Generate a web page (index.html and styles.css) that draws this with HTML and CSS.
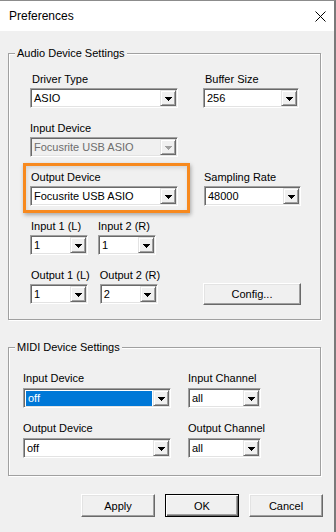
FILE: index.html
```html
<!DOCTYPE html>
<html>
<head>
<meta charset="utf-8">
<link rel="stylesheet" href="styles.css">
</head>
<body>
<div class="window">
  <div class="titlebar">
    <span class="title">Preferences</span>
    <svg class="close" width="11" height="11" viewBox="0 0 11 11"><path d="M0.5 0.5L10.5 10.5M10.5 0.5L0.5 10.5" stroke="#000" stroke-width="1" fill="none"/></svg>
  </div>
  <div class="client">
    <fieldset class="group group-audio">
      <legend>Audio Device Settings</legend>
      <div class="audio-grid">
        <div class="field c1">
          <label class="lbl lbl-pad">Driver Type</label>
          <div class="combo w148"><span class="value">ASIO</span><span class="arrow"><svg width="7" height="4" viewBox="0 0 7 4"><path d="M0 0h7v1h-1v1h-1v1h-1v1h-1v-1h-1v-1h-1v-1h-1z"/></svg></span></div>
        </div>
        <div class="field c2">
          <label class="lbl lbl-pad">Buffer Size</label>
          <div class="combo w96"><span class="value">256</span><span class="arrow"><svg width="7" height="4" viewBox="0 0 7 4"><path d="M0 0h7v1h-1v1h-1v1h-1v1h-1v-1h-1v-1h-1v-1h-1z"/></svg></span></div>
        </div>
        <div class="field c1">
          <label class="lbl">Input Device</label>
          <div class="combo w148 disabled"><span class="value">Focusrite USB ASIO</span><span class="arrow"><svg width="7" height="4" viewBox="0 0 7 4"><path d="M0 0h7v1h-1v1h-1v1h-1v1h-1v-1h-1v-1h-1v-1h-1z"/></svg></span></div>
        </div>
        <div class="field c1 hl">
          <label class="lbl lbl-1">Output Device</label>
          <div class="combo w148"><span class="value">Focusrite USB ASIO</span><span class="arrow"><svg width="7" height="4" viewBox="0 0 7 4"><path d="M0 0h7v1h-1v1h-1v1h-1v1h-1v-1h-1v-1h-1v-1h-1z"/></svg></span></div>
        </div>
        <div class="field c2 shift">
          <label class="lbl">Sampling Rate</label>
          <div class="combo w97"><span class="value">48000</span><span class="arrow"><svg width="7" height="4" viewBox="0 0 7 4"><path d="M0 0h7v1h-1v1h-1v1h-1v1h-1v-1h-1v-1h-1v-1h-1z"/></svg></span></div>
        </div>
        <div class="pair c1">
          <div class="field">
            <label class="lbl lbl-1">Input 1 (L)</label>
            <div class="combo w58"><span class="value">1</span><span class="arrow"><svg width="7" height="4" viewBox="0 0 7 4"><path d="M0 0h7v1h-1v1h-1v1h-1v1h-1v-1h-1v-1h-1v-1h-1z"/></svg></span></div>
          </div>
          <div class="field">
            <label class="lbl">Input 2 (R)</label>
            <div class="combo w58"><span class="value">1</span><span class="arrow"><svg width="7" height="4" viewBox="0 0 7 4"><path d="M0 0h7v1h-1v1h-1v1h-1v1h-1v-1h-1v-1h-1v-1h-1z"/></svg></span></div>
          </div>
        </div>
        <div class="pair c1">
          <div class="field">
            <label class="lbl lbl-1">Output 1 (L)</label>
            <div class="combo w58"><span class="value">1</span><span class="arrow"><svg width="7" height="4" viewBox="0 0 7 4"><path d="M0 0h7v1h-1v1h-1v1h-1v1h-1v-1h-1v-1h-1v-1h-1z"/></svg></span></div>
          </div>
          <div class="field">
            <label class="lbl">Output 2 (R)</label>
            <div class="combo w58"><span class="value">2</span><span class="arrow"><svg width="7" height="4" viewBox="0 0 7 4"><path d="M0 0h7v1h-1v1h-1v1h-1v1h-1v-1h-1v-1h-1v-1h-1z"/></svg></span></div>
          </div>
        </div>
        <button class="btn config c2">Config...</button>
      </div>
    </fieldset>

    <fieldset class="group group-midi">
      <legend>MIDI Device Settings</legend>
      <div class="midi-grid">
        <div class="field">
          <label class="lbl">Input Device</label>
          <div class="combo w148"><span class="value selected">off</span><span class="arrow"><svg width="7" height="4" viewBox="0 0 7 4"><path d="M0 0h7v1h-1v1h-1v1h-1v1h-1v-1h-1v-1h-1v-1h-1z"/></svg></span></div>
        </div>
        <div class="field">
          <label class="lbl">Input Channel</label>
          <div class="combo w73"><span class="value">all</span><span class="arrow"><svg width="7" height="4" viewBox="0 0 7 4"><path d="M0 0h7v1h-1v1h-1v1h-1v1h-1v-1h-1v-1h-1v-1h-1z"/></svg></span></div>
        </div>
        <div class="field">
          <label class="lbl">Output Device</label>
          <div class="combo w148"><span class="value">off</span><span class="arrow"><svg width="7" height="4" viewBox="0 0 7 4"><path d="M0 0h7v1h-1v1h-1v1h-1v1h-1v-1h-1v-1h-1v-1h-1z"/></svg></span></div>
        </div>
        <div class="field">
          <label class="lbl">Output Channel</label>
          <div class="combo w73"><span class="value">all</span><span class="arrow"><svg width="7" height="4" viewBox="0 0 7 4"><path d="M0 0h7v1h-1v1h-1v1h-1v1h-1v-1h-1v-1h-1v-1h-1z"/></svg></span></div>
        </div>
      </div>
    </fieldset>

    <div class="buttons">
      <button class="btn">Apply</button>
      <button class="btn default">OK</button>
      <button class="btn">Cancel</button>
    </div>
  </div>
</div>
</body>
</html>
```
FILE: styles.css
```css
html, body {
  margin: 0;
  padding: 0;
}
body {
  width: 336px;
  height: 532px;
  overflow: hidden;
  background: #f0f0f0;
  font-family: "Liberation Sans", Arial, sans-serif;
  font-size: 11px;
  color: #000;
}
.window {
  height: 532px;
  box-sizing: border-box;
  border-top: 1px solid #8c8c8c;
  border-right: 2px solid #7a7a7a;
  background: #f0f0f0;
}
.titlebar {
  height: 30px;
  background: #fff;
  display: flex;
  align-items: center;
  padding-left: 9px;
}
.title {
  font-size: 12px;
}
.close {
  margin-left: auto;
  margin-right: 8px;
}
.client {
  padding-top: 15px;
}
.group {
  margin: 0 0 0 8px;
  width: 313px;
  box-sizing: border-box;
  border: 1px solid #a0a0a0;
  box-shadow: 1px 1px 0 #fff, inset 1px 1px 0 #fff;
  min-inline-size: 0;
  padding-left: 6px;
  padding-right: 6px;
}
.group legend {
  padding: 0 2px;
  line-height: 14px;
  height: 14px;
  background: #f0f0f0;
}
.group-audio {
  padding-top: 12px;
  padding-bottom: 15px;
}
.group-midi {
  margin-top: 20px;
  padding-top: 17px;
  padding-bottom: 17px;
}
.audio-grid {
  margin-left: 15px;
  display: grid;
  grid-template-columns: 148px 98px;
  column-gap: 25px;
  row-gap: 13px;
}
.midi-grid {
  margin-left: 8px;
  display: grid;
  grid-template-columns: 148px 73px;
  column-gap: 17px;
  row-gap: 13px;
}
.c1 { grid-column: 1; }
.c2 { grid-column: 2; }
.field {
  display: flex;
  flex-direction: column;
}
.lbl {
  display: block;
  height: 14px;
  line-height: 14px;
  margin-bottom: 2px;
  white-space: nowrap;
}
.midi-grid .lbl {
  margin-bottom: 3px;
}
.lbl-pad { padding-left: 2px; }
.lbl-1 { padding-left: 1px; }
.shift { margin-left: 1px; }
.pair {
  display: flex;
  gap: 10px;
}
.combo {
  height: 20px;
  box-sizing: border-box;
  border: 1px solid;
  border-color: #a0a0a0 #fff #fff #a0a0a0;
  box-shadow: inset 1px 1px 0 #696969, inset -1px -1px 0 #e3e3e3;
  background: #fff;
  padding: 1px;
  display: flex;
}
.w148 { width: 148px; }
.w96 { width: 96px; }
.w97 { width: 97px; }
.w58 { width: 58px; }
.w73 { width: 73px; }
.value {
  flex: 1;
  min-width: 0;
  padding-left: 2px;
  line-height: 16px;
  white-space: nowrap;
  overflow: hidden;
}
.value.selected {
  margin: 1px 1px 0 1px;
  line-height: 15px;
  padding-left: 2px;
  background: #0078d7;
  color: #fff;
}
.arrow {
  width: 16px;
  height: 16px;
  flex: none;
  box-sizing: border-box;
  border: 1px solid;
  border-color: #e3e3e3 #696969 #696969 #e3e3e3;
  box-shadow: inset 1px 1px 0 #fff, inset -1px -1px 0 #a0a0a0;
  background: #f0f0f0;
  display: flex;
  align-items: center;
  justify-content: center;
}
.arrow svg {
  display: block;
  fill: #000;
  margin-top: 1px;
}
.combo.disabled {
  background: #f0f0f0;
}
.combo.disabled .value {
  color: #6d6d6d;
}
.combo.disabled .arrow svg {
  fill: #a0a0a0;
}
.hl {
  position: relative;
}
.hl::after {
  content: "";
  position: absolute;
  left: -7px;
  top: -7px;
  right: -12px;
  bottom: -7px;
  border: 3px solid #f7891e;
  box-shadow: 1px 2px 4px rgba(0, 0, 0, 0.3), inset 1px 2px 4px rgba(0, 0, 0, 0.12);
  pointer-events: none;
}
.btn {
  font-family: "Liberation Sans", Arial, sans-serif;
  font-size: 11px;
  color: #000;
  width: 74px;
  height: 23px;
  box-sizing: border-box;
  padding: 0;
  background: #f0f0f0;
  border: 1px solid;
  border-color: #fff #696969 #696969 #fff;
  box-shadow: inset -1px -1px 0 #a0a0a0, inset 1px 1px 0 #e3e3e3;
  border-radius: 0;
}
.btn.default {
  border-color: #000;
  box-shadow: inset 1px 1px 0 #fff, inset -1px -1px 0 #696969, inset -2px -2px 0 #a0a0a0;
}
.config {
  width: 98px;
  height: 22px;
  align-self: end;
  margin-bottom: -1px;
}
.buttons {
  margin-top: 18px;
  display: flex;
  justify-content: flex-end;
  gap: 10px;
  padding-right: 11px;
}
```
